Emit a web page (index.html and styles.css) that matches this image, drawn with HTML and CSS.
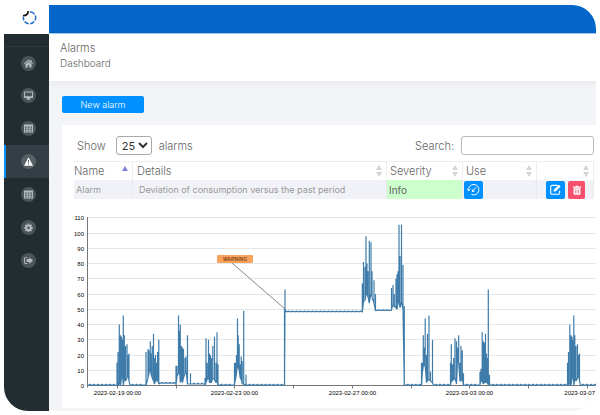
FILE: index.html
```html
<!DOCTYPE html>
<html lang="en">
<head>
  <meta charset="UTF-8" />
  <title>Alarms</title>
  <meta name="viewport" content="width=device-width, initial-scale=1.0" />
  <link rel="stylesheet" href="styles.css">
</head>
<body>
  <div class="app">
    <a class="logo" href="#" aria-label="Home">
      <svg width="15" height="15" viewBox="0 0 15 15" fill="none" stroke-width="1.5">
        <path d="M7.8 1.700A6 6 0 0 1 12.600 4.300M13.300 5.500A6 6 0 0 1 13 10.400M12.200 11.500A6 6 0 0 1 8.200 13.700M6.800 13.700A6 6 0 0 1 2.600 11.500M1.900 10.400A6 6 0 0 1 1.500 7" stroke="#1f6fce"/>
        <path d="M1 5.600C3.600 6 6 4.400 6.300 1.200" stroke="#111" stroke-width="1.700"/>
      </svg>
    </a>
    <div class="topbar"></div>

    <nav class="sidebar">
      <a href="#" aria-label="Home"><span>
        <svg viewBox="0 0 16 16"><path d="M8 1L0 8l1.200 1.300L8 3.500l6.800 5.800L16 8l-2.200-2V2h-2.300v2zM2.500 9.500V15h4.200v-4h2.600v4h4.200V9.500L8 4.800z"/></svg>
      </span></a>
      <a href="#" aria-label="Monitor"><span>
        <svg viewBox="0 0 16 16"><path d="M1 1h14a1 1 0 0 1 1 1v9.500a1 1 0 0 1-1 1h-4.500l.5 2v1H5v-1l.5-2H1a1 1 0 0 1-1-1V2a1 1 0 0 1 1-1zM1.700 2.700v6.800h12.600V2.700z" fill-rule="evenodd"/></svg>
      </span></a>
      <a href="#" aria-label="Tables"><span>
        <svg viewBox="0 0 16 16"><path d="M0 1h16v14H0zM1.700 4.500v2.200h3V4.500zM6.500 4.500v2.200h3V4.500zM11.300 4.500v2.200h3V4.500zM1.700 8.200v2h3v-2zM6.500 8.200v2h3v-2zM11.300 8.200v2h3v-2zM1.700 11.700v1.800h3v-1.800zM6.500 11.700v1.800h3v-1.800zM11.300 11.700v1.800h3v-1.800z" fill-rule="evenodd"/></svg>
      </span></a>
      <a href="#" class="active" aria-label="Alarms"><span>
        <svg viewBox="0 0 16 16"><path d="M8 .5L16 15.500H0zM7 5.500l.4 5h1.200l.4-5zM7.100 11.500v1.800h1.800v-1.800z" fill-rule="evenodd"/></svg>
      </span></a>
      <a href="#" aria-label="Reports"><span>
        <svg viewBox="0 0 16 16"><path d="M0 1h16v14H0zM1.700 4.500v2.200h3V4.500zM6.500 4.500v2.200h3V4.500zM11.300 4.500v2.200h3V4.500zM1.700 8.200v2h3v-2zM6.500 8.200v2h3v-2zM11.300 8.200v2h3v-2zM1.700 11.700v1.800h3v-1.800zM6.500 11.700v1.800h3v-1.800zM11.300 11.700v1.800h3v-1.800z" fill-rule="evenodd"/></svg>
      </span></a>
      <a href="#" aria-label="Settings"><span>
        <svg viewBox="0 0 16 16"><path d="M6.800 1h2.400l.4 2 1.300.6 1.700-1.200 1.700 1.700-1.200 1.700.6 1.300 2 .4v2.400l-2 .4-.6 1.300 1.200 1.700-1.700 1.700-1.700-1.200-1.300.6-.4 2H6.800l-.4-2-1.300-.6-1.700 1.200-1.700-1.700 1.200-1.700-.6-1.300-2-.4V7.500l2-.4.6-1.300-1.200-1.700 1.700-1.700 1.700 1.200L6.400 3zM8 6.200a2.200 2.200 0 1 0 0 4.400 2.200 2.200 0 0 0 0-4.400z" fill-rule="evenodd"/></svg>
      </span></a>
      <a href="#" aria-label="Log out"><span>
        <svg viewBox="0 0 16 16"><path d="M6 2H2.500A2.500 2.500 0 0 0 0 4.500v7A2.500 2.500 0 0 0 2.500 14H6v-1.600H2.700a1 1 0 0 1-1-1V4.600a1 1 0 0 1 1-1H6zM9.500 2L16 8l-6.500 6v-3.500h-5v-5h5z"/></svg>
      </span></a>
    </nav>

    <main>
      <header>
        <h1>Alarms</h1>
        <p>Dashboard</p>
      </header>

      <div class="content">
        <button class="new-alarm" type="button">New alarm</button>

        <section class="card">
          <div class="controls">
            <label for="length">Show</label>
            <select id="length">
              <option>10</option>
              <option selected>25</option>
              <option>50</option>
            </select>
            <span>alarms</span>
            <label class="search-label" for="search">Search:</label>
            <input type="text" id="search">
          </div>

          <table>
            <thead>
              <tr>
                <th class="col-name"><div>Name <svg class="sort asc" viewBox="0 0 6 12"><path d="M3 1l3 5H0z"/></svg></div></th>
                <th><div>Details <svg class="sort" viewBox="0 0 6 12"><path d="M3 0l3 5H0zM0 7h6l-3 5z"/></svg></div></th>
                <th class="col-severity"><div>Severity <svg class="sort" viewBox="0 0 6 12"><path d="M3 0l3 5H0zM0 7h6l-3 5z"/></svg></div></th>
                <th class="col-use"><div>Use <svg class="sort" viewBox="0 0 6 12"><path d="M3 0l3 5H0zM0 7h6l-3 5z"/></svg></div></th>
                <th class="col-actions"><div><svg class="sort" viewBox="0 0 6 12"><path d="M3 0l3 5H0zM0 7h6l-3 5z"/></svg></div></th>
              </tr>
            </thead>
            <tbody>
              <tr>
                <td>Alarm</td>
                <td class="details">Deviation of consumption versus the past period</td>
                <td class="info">Info</td>
                <td class="use">
                  <button class="icon-btn" type="button" aria-label="History">
                    <svg width="13" height="13" viewBox="0 0 12 12" fill="none" stroke="#fff" stroke-width=".9"><path d="M1.500 7A4.800 4.800 0 1 1 4 10.400M.2 5.200l1.300 2 1.800-1.600M8.300 4L5 7.800M5 6v1.800h1.800"/></svg>
                  </button>
                </td>
                <td class="actions">
                  <div>
                    <button class="icon-btn" type="button" aria-label="Edit">
                      <svg width="11" height="11" viewBox="0 0 16 16"><path d="M11 2H3a2 2 0 0 0-2 2v9a2 2 0 0 0 2 2h9a2 2 0 0 0 2-2V9.500" fill="none" stroke="#fff" stroke-width="1.600"/><path d="M13 1l2.500 2.500-7 7L5 11.200 5.800 8z" fill="#fff"/></svg>
                    </button>
                    <button class="icon-btn delete" type="button" aria-label="Delete">
                      <svg width="10" height="10" viewBox="0 0 16 16"><path d="M1.500 2.500h4L6.500 1h3l1 1.500h4v2h-13zM2.500 5.200h11V14a1.500 1.500 0 0 1-1.500 1.500H4A1.500 1.500 0 0 1 2.500 14zM5 7v6.500h1V7zM7.500 7v6.500h1V7zM10 7v6.500h1V7z" fill="#fff" fill-rule="evenodd"/></svg>
                    </button>
                  </div>
                </td>
              </tr>
            </tbody>
          </table>

          <svg class="chart" id="chart" viewBox="0 0 534 190" role="img" aria-label="Consumption chart"></svg>
        </section>
      </div>
    </main>
  </div>

  <script src="chart.js"></script>
</body>
</html>
```
FILE: styles.css
```css
body {
  margin: 0;
  background: #fff;
  color: #666;
  font-family: Inter, "Open Sans", sans-serif;
  font-weight: 300;
  font-size: 11px;
}
.app {
  display: grid;
  grid-template-columns: 45px 1fr;
  grid-template-rows: 29px auto;
  margin: 5px 4px 4px;
  border-radius: 24px;
  overflow: hidden;
}
.logo {
  display: flex;
  align-items: center;
  justify-content: center;
  padding-left: 6px;
  padding-bottom: 5px;
}
.topbar {
  background: #0466c8;
  border-bottom: 1px solid #a5c9ee;
}

.sidebar {
  background: #222d32;
  padding-top: 12px;
}
.sidebar a {
  display: flex;
  align-items: center;
  justify-content: center;
  height: 33px;
  padding-left: 3px;
}
.sidebar a:first-child {
  height: 32px;
  border-top: 1px solid #2f3a3f;
}
.sidebar a.active {
  background: #343f45;
  border-left: 2px solid #0090ff;
  padding-left: 1px;
}
.sidebar span {
  display: flex;
  align-items: center;
  justify-content: center;
  width: 15px;
  height: 15px;
  border-radius: 50%;
  background: #4b5559;
}
.sidebar svg {
  width: 9px;
  height: 9px;
  fill: #b4bbc2;
}
.sidebar .active span {
  background: #566065;
}
.sidebar .active svg {
  fill: #fff;
}

main {
  display: flex;
  flex-direction: column;
  background: #f2f4f7;
}
header {
  background: #fff;
  padding: 6px 11px 10px;
  box-shadow: 0 2px 8px rgba(0, 0, 0, 0.06);
}
header h1 {
  margin: 0;
  font-size: 11px;
  font-weight: 300;
  line-height: 16px;
}
header p {
  margin: 0;
  font-size: 10px;
  line-height: 15px;
}
.content {
  padding: 15px 0 3px 13px;
}
.new-alarm {
  display: block;
  width: 82px;
  height: 17px;
  padding: 0 0 1px;
  border: none;
  border-radius: 2px;
  background: #0090ff;
  color: #fff;
  font: inherit;
  font-size: 9px;
}
.card {
  margin-top: 12px;
  padding-top: 11px;
  padding-bottom: 9px;
  border-radius: 3px 0 0 0;
  background: #fff;
}

.controls {
  display: flex;
  align-items: center;
  gap: 7px;
  height: 19px;
  padding: 0 2px 0 15px;
}
.controls select {
  width: 36px;
  height: 19px;
  margin-left: 3px;
  padding: 0 0 0 1px;
  border: 1px solid #aaa;
  border-radius: 3px;
  background: #fff;
  color: #333;
  font: inherit;
  font-weight: 400;
}
.search-label {
  margin-left: auto;
}
.controls input {
  box-sizing: border-box;
  width: 133px;
  height: 19px;
  border: 1px solid #bbb;
  border-radius: 3px;
  background: #fff;
}

table {
  table-layout: fixed;
  width: calc(100% - 14px);
  margin: 6px 2px 0 12px;
  border-spacing: 0;
}
th {
  height: 18px;
  padding: 0 4px;
  border-top: 1px solid #eee;
  border-right: 1px solid #eee;
  font-weight: 300;
  text-align: left;
}
th div {
  display: flex;
  align-items: center;
  justify-content: space-between;
}
th:first-child {
  padding-left: 0;
}
th:last-child div {
  justify-content: flex-end;
}
th.col-severity,
th.col-use {
  padding-left: 3px;
}
.col-name {
  width: 54px;
}
.col-severity {
  width: 68px;
}
.col-use {
  width: 66px;
}
.col-actions {
  width: 48px;
}
.sort {
  width: 6px;
  height: 12px;
  fill: #d4d4d4;
}
.sort.asc {
  fill: #7b82d8;
}
td {
  height: 19px;
  padding: 0 2px;
  background: #f1f2f7;
  border-right: 1px solid #e9ebf0;
  color: #999;
  font-size: 9px;
  font-weight: 400;
  line-height: 18px;
}
td.details {
  padding-left: 6px;
}
td.info {
  background: #ccffcc;
  color: #666;
  font-size: 10px;
}
td.use {
  padding-left: 1px;
}
.actions div {
  display: flex;
  justify-content: flex-end;
  gap: 3px;
  padding-right: 6px;
}
.icon-btn {
  display: flex;
  align-items: center;
  justify-content: center;
  width: 19px;
  height: 18px;
  padding: 0;
  border: none;
  border-radius: 2px;
  background: #0090ff;
}
.icon-btn.delete {
  width: 17px;
  background: #f5516c;
}

.chart {
  display: block;
  width: 100%;
  margin-top: 10px;
}
.chart .grid {
  stroke: #e4e6e8;
}
.chart .axis {
  stroke: #777;
}
.chart text {
  fill: #000;
  font-family: "Liberation Sans", Arial, sans-serif;
  font-weight: 400;
  font-size: 6px;
}
.chart .series {
  fill: none;
  stroke: #3f7caa;
  stroke-width: 1.2;
  stroke-linejoin: bevel;
}
.chart .callout {
  stroke: #888;
}
.chart .badge {
  fill: #f9a25c;
}
.chart .badge-text {
  fill: #8a4a1c;
  font-size: 5px;
  font-weight: 700;
}
```
FILE: chart.js
```js
const chart = document.getElementById("chart");
const LEFT = 25.5;
const RIGHT = 534;
const BASE = 176.5;
const UNIT = 1.524;

function add(tag, attrs, text) {
  const el = document.createElementNS("http://www.w3.org/2000/svg", tag);
  for (const key in attrs) el.setAttribute(key, attrs[key]);
  if (text) el.textContent = text;
  chart.appendChild(el);
}

// each burst: [x, low, high]
const weekday = [[55, 0, 15], [56, 0, 22], [57.3, 2, 40], [58.5, 0, 33], [59.5, 5, 32], [60.5, 8, 30], [61.3, 0, 46], [62.3, 5, 33], [63.5, 3, 26], [65, 5, 27], [66, 8, 20], [67, 3, 21]];
const bursts = [
  weekday,
  [[84, 0, 22], [86, 5, 24], [87, 8, 23], [88.3, 12, 29], [89.2, 7, 21], [90.2, 5, 26], [91.5, 3, 34], [92.5, 1, 18], [93.5, 3, 20], [94.7, 3, 15], [95.6, 4, 22], [96.8, 1, 30]],
  [[114, 0, 13], [115, 6, 13], [116.5, 8, 46], [117.5, 10, 36], [118.3, 2, 40], [119.5, 4, 26], [120.5, 2, 25], [121.5, 5, 24], [123, 8, 18], [124, 10, 19], [125.5, 1, 33], [128.5, 1, 8]],
  [[143, 0, 5], [144, 2, 31], [145.2, 4, 15], [146.5, 6, 30], [147.5, 2, 21], [148.5, 2, 20], [149.5, 2, 18], [150.8, 5, 26], [152.5, 4, 32], [154, 2, 15], [155, 3, 35], [156, 0, 14]],
  [[172.5, 1, 15], [173.5, 4, 15], [174.5, 8, 20], [175.5, 15, 44], [176.2, 12, 33], [177.2, 10, 27], [178.2, 5, 14], [179.2, 4, 19], [180.2, 1, 16], [181.7, 1, 49], [184, 0, 7]],
  [[222.5, 0, 50], [223, 50, 63]],
  [[300.3, 48, 67], [301.5, 55, 81], [303, 56, 78], [304, 60, 98], [305, 60, 80], [306, 58, 75], [307.3, 54, 95], [309, 61, 94], [310, 58, 75], [312, 54, 69], [313.5, 49, 60]],
  [[329.5, 50, 64], [331, 53, 66], [332.3, 52, 60], [334, 51, 70], [335, 50, 73], [336, 55, 75], [337, 55, 105.5], [338, 51, 85], [339.5, 55, 105.5], [341, 50, 79], [342.3, 0, 52]],
  [[359.5, 0, 15], [360.3, 8, 15], [361.3, 13, 33], [362.2, 13, 25], [363.2, 13, 44], [364.5, 2, 20], [365.5, 3, 34], [367, 4, 46], [368.5, 3, 9], [370.5, 2, 30]],
  [[388.5, 0, 15], [389.3, 3, 27], [390.5, 3, 14], [391.7, 4, 18], [393, 5, 31], [394.5, 1, 29], [395.5, 17, 25], [396.7, 15, 33], [398, 3, 15], [399, 3, 26], [400.3, 5, 23], [401.5, 0, 8]],
  [[418, 1, 9], [419, 3, 11], [420.2, 3, 35], [421.3, 1, 29], [422.5, 2, 28], [423.5, 2, 34], [424.5, 3, 21], [425.5, 1, 18], [426.3, 1, 63], [427.5, 0, 7]],
  weekday.map(([x, low, high]) => [x + 450.5, low, high])
];
// idle level after each burst
const idle = [0.3, 1.5, 1, 0.3, 0.3, 48.5, 49.3, 0.3, 0.3, 0.3, 0.3, 0.3];

const y = value => BASE - value * UNIT;
const points = [];
function rest(from, to, level) {
  for (let x = from; x < to; x += 4) {
    points.push([x, level], [x + 2, level], [x + 2, level + 0.4], [x + 3, level + 0.4], [x + 3, level]);
  }
}

rest(LEFT, 52, 0.3);
bursts.forEach((burst, i) => {
  for (const [x, low, high] of burst) points.push([x, low], [x, high], [x, low]);
  const end = burst[burst.length - 1][0] + 1;
  points.push([end, idle[i]]);
  rest(end, i < bursts.length - 1 ? bursts[i + 1][0][0] - 4 : RIGHT, idle[i]);
  if (i < bursts.length - 1) points.push([bursts[i + 1][0][0], idle[i]]);
});

for (let value = 0; value <= 110; value += 10) {
  const gy = Math.floor(y(value)) + 0.5;
  if (value) add("line", { class: "grid", x1: LEFT, x2: RIGHT, y1: gy, y2: gy });
  add("text", { x: 22, y: gy + 2, "text-anchor": "end" }, String(value));
}
add("line", { class: "axis", x1: LEFT, x2: LEFT, y1: 8, y2: BASE + 2 });
add("line", { class: "axis", x1: LEFT, x2: RIGHT, y1: BASE, y2: BASE });

const dates = ["2023-02-19 00:00", "", "2023-02-23 00:00", "", "2023-02-27 00:00", "", "2023-03-03 00:00", "", "2023-03-07"];
dates.forEach((date, i) => {
  const x = Math.floor(55.5 + i * 58.7) + 0.5;
  add("line", { class: "axis", x1: x, x2: x, y1: BASE, y2: BASE + 3 });
  const last = i === dates.length - 1;
  if (date) add("text", { x: last ? RIGHT - 1 : x, y: BASE + 9, "text-anchor": last ? "end" : "middle" }, date);
});

add("line", { class: "callout", x1: 170, y1: 54, x2: 223, y2: 100 });
add("polyline", { class: "series", points: points.map(([x, value]) => x + "," + y(value)).join(" ") });
add("rect", { class: "badge", x: 155, y: 46, width: 36, height: 8, rx: 1 });
add("text", { class: "badge-text", x: 173, y: 52, "text-anchor": "middle" }, "WARNING");
```
